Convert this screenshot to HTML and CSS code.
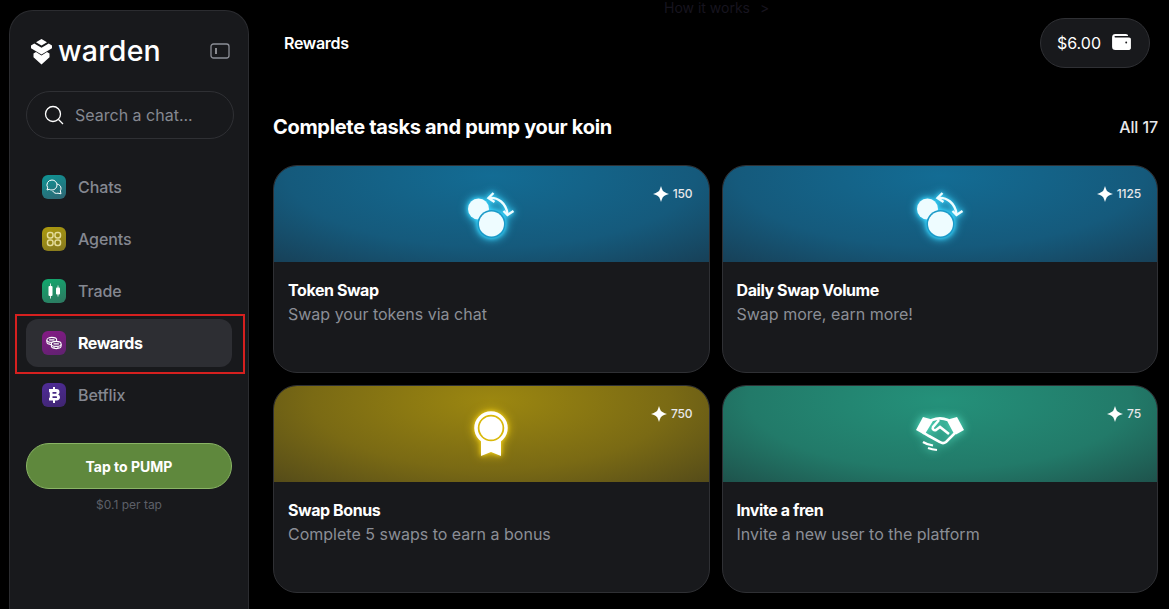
FILE: index.html
```html
<!DOCTYPE html>
<html lang="en">
<head>
  <meta charset="UTF-8">
  <meta name="viewport" content="width=device-width, initial-scale=1.0">
  <title>Warden Rewards</title>
  <link rel="stylesheet" href="styles.css">
</head>
<body>
  <svg class="defs" width="0" height="0" aria-hidden="true">
    <symbol id="swap" viewBox="0 0 50 50">
      <circle cx="12.500" cy="20" r="10.500" fill="currentColor"/>
      <circle cx="25.500" cy="35" r="14" fill="#1b9ac8"/>
      <circle cx="25.500" cy="35" r="12.500" fill="currentColor"/>
      <path d="M23 9c9-1 17 5 18.500 16" fill="none" stroke="currentColor" stroke-width="2.400"/>
      <path d="M27.500 4l-5 5 6 4M37.500 22l4 4 6-4" fill="none" stroke="currentColor" stroke-width="2.400"/>
    </symbol>
    <symbol id="spark" viewBox="0 0 16 16">
      <path d="M8 0c.6 1.800 1 3.300 1.800 4.800.9 1 2.700 2.200 6.200 3.200-3.500 1-5.300 2.200-6.200 3.200C9 12.700 8.600 14.200 8 16c-.6-1.800-1-3.300-1.800-4.800C5.300 10.200 3.500 9 0 8c3.500-1 5.300-2.200 6.200-3.200C7 3.300 7.400 1.800 8 0z" fill="currentColor"/>
    </symbol>
  </svg>

  <div class="app">
    <aside class="sidebar">
      <div class="brand">
        <svg class="brand-mark" viewBox="0 0 21 26" fill="#fff">
          <path d="M10.500 0L16 3.200 10.500 6.400 5 3.200z"/>
          <path d="M0 6.500L3.300 4.500l7.200 4.300 7.200-4.300L21 6.500v2.800L10.500 15.500 0 9.300z"/>
          <path d="M2.500 14.500L5 13l5.500 3.500L16 13l2.500 1.500v3.800L10.500 25.500 2.500 18.300z"/>
        </svg>
        <span class="brand-name">warden</span>
        <svg class="collapse" viewBox="0 0 20 16" fill="none" stroke="#8b8e96" stroke-width="1.300">
          <rect x="1" y="1" width="18" height="14" rx="2.500"/>
          <path d="M6 5v6" stroke="#c8cad0"/>
        </svg>
      </div>

      <div class="search">
        <svg viewBox="0 0 20 20" fill="none" stroke="#fff" stroke-width="1.300">
          <circle cx="9" cy="9" r="7.500"/>
          <path d="M14.500 14.500L19 19"/>
        </svg>
        <span>Search a chat...</span>
      </div>

      <nav class="nav">
        <a class="nav-item">
          <span class="nav-icon chats">
            <svg viewBox="0 0 16 16" fill="none" stroke="#fff" stroke-width="1">
              <path d="M6 1a5 5 0 110 10c-1 0-2-.2-2.800-.7L1 11l.7-2.300A5 5 0 016 1z"/>
              <path d="M11 5c2.400.5 4 2.200 4 4.300 0 1-.3 1.800-.7 2.500l.7 3-3-.6c-2.200.6-4.300-.3-5.300-2.200"/>
            </svg>
          </span>
          Chats
        </a>
        <a class="nav-item">
          <span class="nav-icon agents">
            <svg viewBox="0 0 16 16" fill="none" stroke="#e4dc9a" stroke-width="1.500">
              <rect x="1.500" y="1.500" width="5.500" height="5.500" rx="2.200"/>
              <rect x="9" y="1.500" width="5.500" height="5.500" rx="2.200"/>
              <rect x="1.500" y="9" width="5.500" height="5.500" rx="2.200"/>
              <rect x="9" y="9" width="5.500" height="5.500" rx="2.200"/>
            </svg>
          </span>
          Agents
        </a>
        <a class="nav-item">
          <span class="nav-icon trade">
            <svg viewBox="0 0 16 16" fill="#fff">
              <rect x="2.500" y="3" width="4" height="10" rx="1"/>
              <rect x="4.100" y="0.500" width="0.800" height="15"/>
              <rect x="10" y="4.500" width="4" height="7" rx="1"/>
              <rect x="11.600" y="2.500" width="0.800" height="11"/>
            </svg>
          </span>
          Trade
        </a>
        <a class="nav-item active">
          <span class="nav-icon rewards">
            <svg viewBox="0 0 18 14" fill="#5f2270" stroke="#fff" stroke-width="1.200">
              <path d="M1 3.500v2.500c0 1.500 2.500 2.800 5.500 2.800"/>
              <ellipse cx="6.500" cy="3.500" rx="5.500" ry="2.800"/>
              <path d="M3.500 3.500h6M3.500 6.800v1" fill="none"/>
              <path d="M6 8v2.500c0 1.600 2.500 2.800 5.500 2.800s5.500-1.200 5.500-2.800V8"/>
              <ellipse cx="11.500" cy="8" rx="5.500" ry="2.800"/>
              <path d="M8.500 8h6M9 11v1.500M13.500 11v1.500" fill="none"/>
            </svg>
          </span>
          Rewards
        </a>
        <a class="nav-item">
          <span class="nav-icon betflix">
            <svg viewBox="0 0 16 16" fill="#fff">
              <path fill-rule="evenodd" d="M7 0h2v2h1.500c2 0 3 1.300 3 2.900 0 1.100-.5 2-1.400 2.600 1.200.5 1.900 1.500 1.900 2.800 0 2-1.300 3.200-3.500 3.200H9V16H7v-2.500H3V11l.8-.5v-5L3 5V2h4zM6.500 5v1.700h3.300a.85.85 0 000-1.700zm0 4.300v1.700h3.700a.85.85 0 000-1.700z"/>
            </svg>
          </span>
          Betflix
        </a>
      </nav>

      <button class="pump">Tap to PUMP</button>
      <p class="pump-note">$0.1 per tap</p>
    </aside>

    <main class="content">
      <a class="how">How it works <span>&gt;</span></a>
      <header class="topbar">
        <h2>Rewards</h2>
        <div class="wallet">
          $6.00
          <svg viewBox="0 0 20 17" fill="#fff">
            <path d="M3.500 0h11c1.500 0 2.500.8 2.500 2H4c-1 0-1.500.4-1.500.9s.5.900 1.500.9h14c1.200 0 2 .8 2 2V15c0 1.200-.8 2-2 2H3.500C1.300 17 0 15.700 0 13.500v-10C0 1.300 1.300 0 3.500 0z"/>
            <circle cx="15" cy="9" r="1" fill="#1a1b1e"/>
          </svg>
        </div>
      </header>

      <div class="section-head">
        <h1>Complete tasks and pump your koin</h1>
        <span>All 17</span>
      </div>

      <section class="tasks">
        <article class="task">
          <div class="task-art blue">
            <svg class="art-icon swap-icon"><use href="#swap"/></svg>
            <span class="points"><svg><use href="#spark"/></svg>150</span>
          </div>
          <div class="task-body">
            <h3>Token Swap</h3>
            <p>Swap your tokens via chat</p>
          </div>
        </article>
        <article class="task">
          <div class="task-art blue">
            <svg class="art-icon swap-icon"><use href="#swap"/></svg>
            <span class="points"><svg><use href="#spark"/></svg>1125</span>
          </div>
          <div class="task-body">
            <h3>Daily Swap Volume</h3>
            <p>Swap more, earn more!</p>
          </div>
        </article>
        <article class="task">
          <div class="task-art gold">
            <svg class="art-icon medal-icon" viewBox="0 0 34 46">
              <path d="M7 26h20v19l-10-4-10 4z" fill="#fff"/>
              <circle cx="17" cy="17" r="15" fill="#d9b80a" stroke="#fff" stroke-width="3.500"/>
              <circle cx="17" cy="17" r="11.500" fill="#fff"/>
            </svg>
            <span class="points"><svg><use href="#spark"/></svg>750</span>
          </div>
          <div class="task-body">
            <h3>Swap Bonus</h3>
            <p>Complete 5 swaps to earn a bonus</p>
          </div>
        </article>
        <article class="task">
          <div class="task-art green">
            <svg class="art-icon shake-icon" viewBox="0 0 50 36">
              <path d="M8 1l9 2.500-8 15L1 14z" fill="#fff"/>
              <path d="M42 1l-9 2.500 8 15 8-4.500z" fill="#fff"/>
              <path d="M17 4c5-2 11-2 16 0l7 13-9 9c-2 1.500-4 1.500-6 0l-11-6-5-3z" fill="none" stroke="#fff" stroke-width="2.600"/>
              <path d="M24 4l-6 7c-1 2 1 4 3 3l4-3 9 7" fill="none" stroke="#fff" stroke-width="2.600"/>
              <path d="M8 26c3 2 7 3 10 3.500M13 32c3 1 6 1.600 9 2" fill="none" stroke="#fff" stroke-width="2.200"/>
            </svg>
            <span class="points"><svg><use href="#spark"/></svg>75</span>
          </div>
          <div class="task-body">
            <h3>Invite a fren</h3>
            <p>Invite a new user to the platform</p>
          </div>
        </article>
      </section>
    </main>
  </div>
  <div class="highlight"></div>
</body>
</html>
```

FILE: styles.css
```css
* {
  margin: 0;
  padding: 0;
  box-sizing: border-box;
}

html, body {
  height: 100%;
  overflow: hidden;
}

body {
  background: #000;
  color: #fff;
  font-family: 'Inter', 'Liberation Sans', sans-serif;
}

.defs {
  position: absolute;
}

.app {
  display: flex;
  align-items: flex-start;
  gap: 24px;
  height: 100%;
  padding: 10px 11px 0 9px;
}

/* Sidebar runs off the bottom of the window, so only the top is rounded */
.sidebar {
  flex: none;
  width: 240px;
  height: 100%;
  padding: 0 16px;
  background: #18191c;
  border: 1px solid #2b2c30;
  border-bottom: none;
  border-radius: 24px 24px 0 0;
}

.brand {
  display: flex;
  align-items: center;
  height: 80px;
  padding: 0 2px 0 5px;
}

.brand-mark {
  width: 21px;
  height: 26px;
  margin-top: 1px;
}

.brand-name {
  flex: 1;
  margin: -2px 0 0 6px;
  font-size: 28.500px;
  font-weight: 500;
  letter-spacing: 0.2px;
}

.collapse {
  width: 20px;
  height: 16px;
}

.search {
  display: flex;
  align-items: center;
  gap: 11px;
  width: 208px;
  height: 48px;
  padding: 0 17px;
  border: 1px solid #2f3034;
  border-radius: 24px;
  color: #858891;
  font-size: 16px;
}

.search svg {
  width: 20px;
  height: 20px;
}

.nav {
  display: flex;
  flex-direction: column;
  gap: 4px;
  margin-top: 24px;
}

.nav-item {
  display: flex;
  align-items: center;
  gap: 12px;
  height: 48px;
  padding: 0 16px;
  border-radius: 12px;
  color: #858891;
  font-size: 16px;
  font-weight: 500;
  letter-spacing: -0.1px;
}

.nav-item.active {
  background: #2d2e33;
  color: #fff;
  font-weight: 700;
  letter-spacing: -0.45px;
}

.nav-icon {
  display: flex;
  align-items: center;
  justify-content: center;
  width: 24px;
  height: 24px;
  border-radius: 6px;
}

.nav-icon svg {
  width: 16px;
  height: 16px;
}

.chats { background: linear-gradient(160deg, #0e9595, #2f6472); }
.agents { background: linear-gradient(160deg, #ac9a0e, #85781f); }
.trade { background: linear-gradient(160deg, #10aa6e, #2f7660); }
.rewards { background: linear-gradient(160deg, #851a85, #5f2270); }
.betflix { background: linear-gradient(160deg, #4f2c98, #3f2570); }

.pump {
  display: block;
  width: 206px;
  height: 46px;
  margin-top: 24px;
  background: #5f883d;
  border: 1px solid #8ab565;
  border-radius: 23px;
  color: #fff;
  font-family: inherit;
  font-size: 14px;
  font-weight: 700;
}

.pump-note {
  margin-top: 8px;
  width: 206px;
  text-align: center;
  color: #5d6068;
  font-size: 12px;
}

/* Main */
.content {
  position: relative;
  flex: 1;
  min-width: 0;
}

.how {
  position: absolute;
  top: -11px;
  left: 391px;
  color: #17141f;
  font-size: 14px;
  line-height: 17px;
}

.how span {
  margin-left: 6px;
}

.topbar {
  display: flex;
  align-items: center;
  justify-content: space-between;
  height: 50px;
  margin-top: 8px;
  padding: 0 8px 0 11px;
}

.topbar h2 {
  font-size: 16px;
  font-weight: 600;
  letter-spacing: -0.3px;
}

.wallet {
  display: flex;
  align-items: center;
  gap: 11px;
  height: 50px;
  padding: 0 18px 0 16px;
  background: #18191c;
  border: 1px solid #2f3034;
  border-radius: 25px;
  font-size: 16px;
}

.wallet svg {
  width: 19px;
  height: 16px;
  margin-top: -3px;
}

.section-head {
  display: flex;
  align-items: center;
  justify-content: space-between;
  margin-top: 47px;
  height: 24px;
}

.section-head h1 {
  font-size: 20px;
  font-weight: 700;
  letter-spacing: -0.32px;
}

.section-head span {
  font-size: 16px;
  font-weight: 500;
  letter-spacing: -0.1px;
  color: #e8e8ea;
}

.tasks {
  display: grid;
  grid-template-columns: 1fr 1fr;
  gap: 12px;
  margin-top: 26px;
}

.task {
  height: 208px;
  background: #18191c;
  border: 1px solid #2f3034;
  border-radius: 24px;
  overflow: hidden;
}

.task-art {
  position: relative;
  display: flex;
  align-items: center;
  justify-content: center;
  height: 96px;
}

.blue { background: radial-gradient(85% 135% at 50% 10%, #136c94 0%, #155a7c 55%, #18384c 100%); }
.gold { background: radial-gradient(75% 130% at 50% 15%, #9c8710 0%, #7a6a14 55%, #4e461a 100%); }
.green { background: radial-gradient(80% 130% at 50% 15%, #24917a 0%, #227a69 55%, #1d4844 100%); }

.art-icon {
  color: #eefcff;
  overflow: visible;
}

.swap-icon {
  width: 50px;
  height: 50px;
  filter: drop-shadow(0 0 2px #38d6ff) drop-shadow(0 0 4px #38d6ff);
}

.medal-icon {
  width: 34px;
  height: 46px;
  filter: drop-shadow(0 0 2px #f5d21c) drop-shadow(0 0 5px #d8b80f);
}

.shake-icon {
  width: 50px;
  height: 36px;
  filter: drop-shadow(0 0 5px #5ff0d0);
}

.points {
  position: absolute;
  top: 20px;
  right: 16px;
  display: flex;
  align-items: center;
  gap: 4px;
  font-size: 12px;
  font-weight: 500;
  letter-spacing: -0.1px;
  line-height: 16px;
  color: #e8e8ea;
}

.points svg {
  width: 16px;
  height: 16px;
  color: #fff;
}

.task-body {
  padding: 17px 14px;
}

.task-body h3 {
  font-size: 16px;
  font-weight: 700;
  line-height: 22px;
  letter-spacing: -0.42px;
}

.task-body p {
  margin-top: 2px;
  color: #8b8e96;
  font-size: 16px;
  line-height: 22px;
}

/* Annotation drawn over the active nav item */
.highlight {
  position: absolute;
  top: 314px;
  left: 15px;
  width: 230px;
  height: 60px;
  border: 2px solid #d6201f;
}
```
